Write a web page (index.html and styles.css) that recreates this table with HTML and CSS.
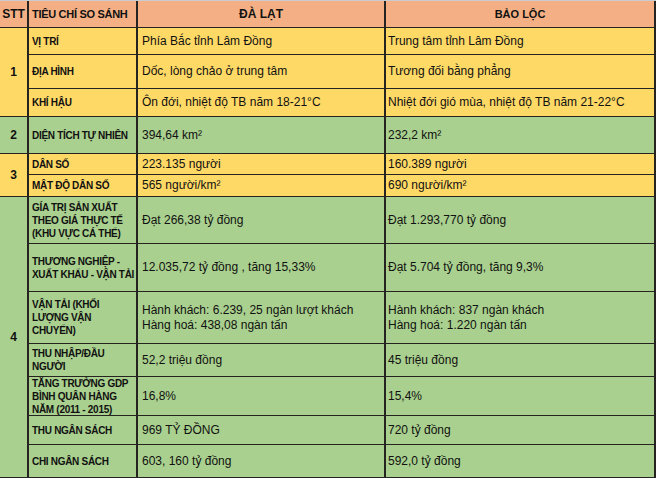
FILE: index.html
```html
<!DOCTYPE html>
<html lang="vi">
<head>
<meta charset="utf-8">
<title>So sánh Đà Lạt - Bảo Lộc</title>
<link rel="stylesheet" href="styles.css">
</head>
<body>
<div class="sheet">
  <div class="cell hd stt-h">STT</div>
  <div class="cell hd lbl lbl-h">TIÊU CHÍ SO SÁNH</div>
  <div class="cell hd city dl">ĐÀ LẠT</div>
  <div class="cell hd city bl">BẢO LỘC</div>

  <div class="cell stt y r1">1</div>
  <div class="cell y lbl">VỊ TRÍ</div>
  <div class="cell y v3">Phía Bắc tỉnh Lâm Đồng</div>
  <div class="cell y v4">Trung tâm tỉnh Lâm Đồng</div>
  <div class="cell y lbl">ĐỊA HÌNH</div>
  <div class="cell y v3">Dốc, lòng chảo ở trung tâm</div>
  <div class="cell y v4">Tương đối bằng phẳng</div>
  <div class="cell y lbl">KHÍ HẬU</div>
  <div class="cell y v3">Ôn đới, nhiệt độ TB năm 18-21°C</div>
  <div class="cell y v4">Nhiệt đới gió mùa, nhiệt độ TB năm 21-22°C</div>

  <div class="cell stt g r2">2</div>
  <div class="cell g lbl">DIỆN TÍCH TỰ NHIÊN</div>
  <div class="cell g v3">394,64 km²</div>
  <div class="cell g v4">232,2 km²</div>

  <div class="cell stt y r3">3</div>
  <div class="cell y lbl">DÂN SỐ</div>
  <div class="cell y v3">223.135 người</div>
  <div class="cell y v4">160.389 người</div>
  <div class="cell y lbl">MẬT ĐỘ DÂN SỐ</div>
  <div class="cell y v3">565 người/km²</div>
  <div class="cell y v4">690 người/km²</div>

  <div class="cell stt g r4">4</div>
  <div class="cell g lbl"><span>GÍA TRỊ SẢN XUẤT<br>THEO GIÁ THỰC TẾ<br>(KHU VỰC CÁ THỂ)</span></div>
  <div class="cell g v3">Đạt 266,38 tỷ đồng</div>
  <div class="cell g v4">Đạt 1.293,770 tỷ đồng</div>
  <div class="cell g lbl"><span>THƯƠNG NGHIỆP -<br>XUẤT KHẨU - VẬN TẢI</span></div>
  <div class="cell g v3">12.035,72 tỷ đồng , tăng 15,33%</div>
  <div class="cell g v4">Đạt 5.704 tỷ đồng, tăng 9,3%</div>
  <div class="cell g lbl"><span>VẬN TẢI (KHỐI<br>LƯỢNG VẬN<br>CHUYỂN)</span></div>
  <div class="cell g v3"><span>Hành khách: 6.239, 25 ngàn lượt khách<br>Hàng hoá: 438,08 ngàn tấn</span></div>
  <div class="cell g v4"><span>Hành khách: 837 ngàn khách<br>Hàng hoá: 1.220 ngàn tấn</span></div>
  <div class="cell g lbl"><span>THU NHẬP/ĐẦU<br>NGƯỜI</span></div>
  <div class="cell g v3">52,2 triệu đồng</div>
  <div class="cell g v4">45 triệu đồng</div>
  <div class="cell g lbl"><span>TĂNG TRƯỞNG GDP<br>BÌNH QUÂN HÀNG<br>NĂM (2011 - 2015)</span></div>
  <div class="cell g v3">16,8%</div>
  <div class="cell g v4">15,4%</div>
  <div class="cell g lbl">THU NGÂN SÁCH</div>
  <div class="cell g v3">969 TỶ ĐỒNG</div>
  <div class="cell g v4">720 tỷ đồng</div>
  <div class="cell g lbl">CHI NGÂN SÁCH</div>
  <div class="cell g v3">603, 160 tỷ đồng</div>
  <div class="cell g v4">592,0 tỷ đồng</div>
</div>
</body>
</html>
```

FILE: styles.css
```css
html, body {
  margin: 0;
  padding: 0;
  background: #ffffff;
}

body {
  font-family: "Liberation Sans", Arial, sans-serif;
  color: #111;
}

.sheet {
  width: 656px;
  border-top: 1px solid #c9ccd2;
  display: grid;
  grid-template-columns: 29px 109px 248px 270px;
  grid-template-rows: 27px 27px 34px 28px 37px 21px 22px 47px 48px 52px 33px 39px 29px 33px;
}

.cell {
  box-sizing: border-box;
  border-right: 2px solid #262420;
  border-bottom: 1px solid #262420;
  display: flex;
  align-items: center;
  white-space: nowrap;
}

.hd { background: #F4B084; }
.y { background: #FFD966; }
.g { background: #A9D08E; }

.stt-h,
.stt {
  font-size: 12px;
  font-weight: bold;
  justify-content: center;
}

.r1 { grid-row: span 3; }
.r3 { grid-row: span 2; }
.r4 { grid-row: span 8; }

.lbl {
  font-size: 10px;
  font-weight: bold;
  line-height: 13px;
  letter-spacing: -0.3px;
  padding: 0 0 0 3px;
}

.lbl-h {
  font-size: 11px;
  letter-spacing: -0.3px;
}

.city {
  justify-content: center;
  font-weight: bold;
}

.dl { font-size: 12px; }
.bl { font-size: 11px; }

.v3, .v4 {
  font-size: 12px;
  line-height: 15px;
}

.v3 { padding-left: 4px; }
.v4 { padding-left: 2px; }
```
